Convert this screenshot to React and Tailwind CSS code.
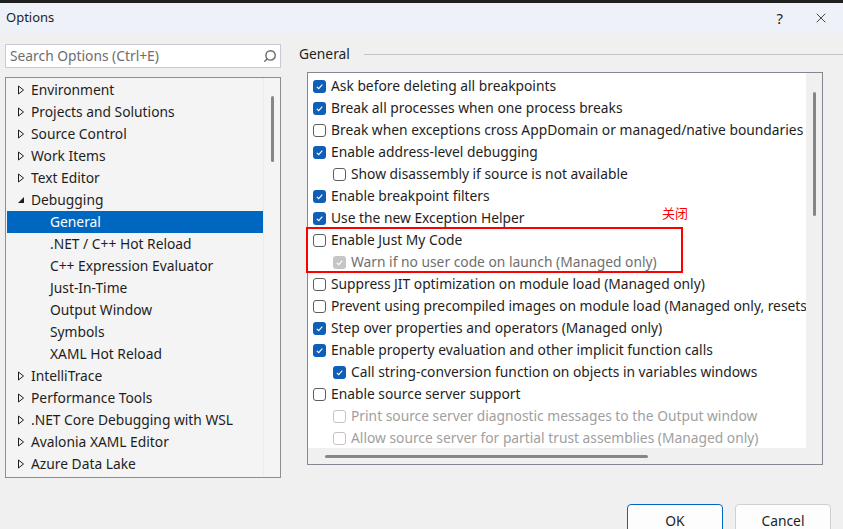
import React from "react";
import { X, Search } from "lucide-react";

const treeItems = [
	{ label: "Environment", level: 0, arrow: "closed" },
	{ label: "Projects and Solutions", level: 0, arrow: "closed" },
	{ label: "Source Control", level: 0, arrow: "closed" },
	{ label: "Work Items", level: 0, arrow: "closed" },
	{ label: "Text Editor", level: 0, arrow: "closed" },
	{ label: "Debugging", level: 0, arrow: "open" },
	{ label: "General", level: 1, selected: true },
	{ label: ".NET / C++ Hot Reload", level: 1 },
	{ label: "C++ Expression Evaluator", level: 1 },
	{ label: "Just-In-Time", level: 1 },
	{ label: "Output Window", level: 1 },
	{ label: "Symbols", level: 1 },
	{ label: "XAML Hot Reload", level: 1 },
	{ label: "IntelliTrace", level: 0, arrow: "closed" },
	{ label: "Performance Tools", level: 0, arrow: "closed" },
	{ label: ".NET Core Debugging with WSL", level: 0, arrow: "closed" },
	{ label: "Avalonia XAML Editor", level: 0, arrow: "closed" },
	{ label: "Azure Data Lake", level: 0, arrow: "closed" },
];

const options = [
	{ label: "Ask before deleting all breakpoints", checked: true },
	{ label: "Break all processes when one process breaks", checked: true },
	{ label: "Break when exceptions cross AppDomain or managed/native boundaries", checked: false },
	{ label: "Enable address-level debugging", checked: true },
	{ label: "Show disassembly if source is not available", checked: false, indent: true },
	{ label: "Enable breakpoint filters", checked: true },
	{ label: "Use the new Exception Helper", checked: true },
	{ label: "Enable Just My Code", checked: false },
	{ label: "Warn if no user code on launch (Managed only)", checked: true, indent: true, disabled: "mid" },
	{ label: "Suppress JIT optimization on module load (Managed only)", checked: false },
	{ label: "Prevent using precompiled images on module load (Managed only, resets on restart)", checked: false },
	{ label: "Step over properties and operators (Managed only)", checked: true },
	{ label: "Enable property evaluation and other implicit function calls", checked: true },
	{ label: "Call string-conversion function on objects in variables windows", checked: true, indent: true },
	{ label: "Enable source server support", checked: false },
	{ label: "Print source server diagnostic messages to the Output window", checked: false, indent: true, disabled: "light" },
	{ label: "Allow source server for partial trust assemblies (Managed only)", checked: false, indent: true, disabled: "light" },
];

// Tree expander triangle
const Arrow = ({ type }) => {
	if (type === "open") {
		return (
			<svg width="8" height="8" viewBox="0 0 8 8">
				<path d="M7 1 L7 7 L1 7 Z" fill="#1e1e1e" />
			</svg>
		);
	}
	return (
		<svg width="8" height="10" viewBox="0 0 8 10">
			<path d="M1.5 1 L6.5 5 L1.5 9 Z" fill="none" stroke="#1e1e1e" strokeWidth="1" />
		</svg>
	);
};

const CheckBox = ({ checked, disabled }) => {
	if (checked) {
		const bg = disabled ? "bg-[#c6c6c6]" : "bg-[#0f5fb8]";
		return (
			<span className={`w-[13px] h-[13px] rounded-[3px] ${bg} flex items-center justify-center shrink-0`}>
				<svg width="9" height="9" viewBox="0 0 9 9">
					<path d="M1.8 4.8 L3.7 6.6 L7.3 2.6" fill="none" stroke="white" strokeWidth="1.1" />
				</svg>
			</span>
		);
	}
	const border = disabled ? "border-[#c9c0c9]" : "border-[#5e5e5e]";
	return <span className={`w-[13px] h-[13px] rounded-[3px] border ${border} bg-white shrink-0`} />;
};

const App = () => {
	return (
		<div
			className="w-[843px] h-[529px] overflow-hidden bg-[#f0f0f0] text-[#1e1e1e] flex flex-col"
			style={{ fontFamily: '"Noto Sans", "Open Sans", sans-serif' }}
		>
			<div className="h-[3px] bg-[#1f1f1f]" />

			{/* Title bar */}
			<div className="h-[30px] bg-[#eef2f8] flex items-center justify-between pl-[6px] pr-[14px]">
				<span className="text-[13px]">Options</span>
				<div className="flex items-center gap-[30px]">
					<span className="text-[15px]">?</span>
					<X size={16} strokeWidth={1.2} />
				</div>
			</div>

			<div className="flex flex-1">
				{/* Left column */}
				<div className="w-[276px] ml-[5px] mt-[11px] flex flex-col">
					<div className="h-[24px] bg-white border border-[#c9c9d9] flex items-center justify-between pl-[4px] pr-[3px]">
						<span className="text-[13.8px] text-[#6d6d6d]">Search Options (Ctrl+E)</span>
						<Search size={14} strokeWidth={2.4} className="text-[#6a6a6a] -scale-x-100" />
					</div>

					<div className="mt-[9px] h-[401px] border border-[#8d8d95] bg-[#f4f4f4] flex">
						<div className="flex-1 pt-[1px] pl-[1px]">
							{treeItems.map((item) => (
								<div
									key={item.label}
									className={`h-[22px] flex items-center text-[13.8px] ${
										item.selected ? "bg-[#0067c0] text-white" : ""
									}`}
								>
									<span className="w-[24px] flex justify-center pl-[4px]">
										{item.arrow && <Arrow type={item.arrow} />}
									</span>
									<span className={item.level === 1 ? "pl-[19px]" : ""}>{item.label}</span>
								</div>
							))}
						</div>
						<div className="w-[17px] border-l border-[#ebebeb] bg-[#f4f4f4] pt-[18px] flex justify-center">
							<div className="w-[3px] h-[66px] rounded-full bg-[#868686]" />
						</div>
					</div>
				</div>

				{/* Right column */}
				<div className="flex-1 ml-[18px] mt-[11px] flex flex-col">
					<div className="flex items-center h-[20px]">
						<span className="text-[13.8px]">General</span>
						<div className="flex-1 h-px bg-[#c4c4c4] ml-[14px]" />
					</div>

					<div className="relative mt-[8px] ml-[8px] w-[516px] h-[393px] border border-[#828790] bg-[#f0f0f0] flex flex-col">
						<div className="flex flex-1 min-h-0">
							<div className="flex-1 bg-white pt-[2px] overflow-hidden">
								{options.map((opt) => (
									<div
										key={opt.label}
										className={`h-[22px] flex items-center gap-[5px] whitespace-nowrap text-[13.8px] ${
											opt.indent ? "pl-[25px]" : "pl-[5px]"
										} ${
											opt.disabled === "mid"
												? "text-[#6f6f6f]"
												: opt.disabled === "light"
												? "text-[#a0a0a0]"
												: ""
										}`}
									>
										<CheckBox checked={opt.checked} disabled={!!opt.disabled} />
										<span>{opt.label}</span>
									</div>
								))}
							</div>
							<div className="w-[16px] pt-[19px] flex justify-center">
								<div className="w-[3px] h-[124px] rounded-full bg-[#868686]" />
							</div>
						</div>
						<div className="h-[16px] flex items-center pl-[17px]">
							<div className="w-[323px] h-[3px] rounded-full bg-[#868686]" />
						</div>

						{/* annotation */}
						<div className="absolute left-[-2px] top-[154px] w-[377px] h-[46px] border-2 border-[#ff0000]" />
						<span className="absolute left-[354px] top-[130px] text-[13px] text-[#ff0000]" style={{ fontFamily: '"Noto Sans CJK SC", sans-serif' }}>
							关闭
						</span>
					</div>
				</div>
			</div>

			{/* Buttons */}
			<div className="h-[51px] flex justify-end items-start gap-[12px] pr-[12px] pt-[26px]">
				<button className="w-[96px] h-[32px] rounded-[4px] border border-[#0067c0] bg-[#fdfdfd] text-[13.8px] pt-[2px]">OK</button>
				<button className="w-[96px] h-[32px] rounded-[4px] border border-[#d0d0d0] bg-[#fdfdfd] text-[13.8px] pt-[2px]">Cancel</button>
			</div>
		</div>
	);
};

export default App;
